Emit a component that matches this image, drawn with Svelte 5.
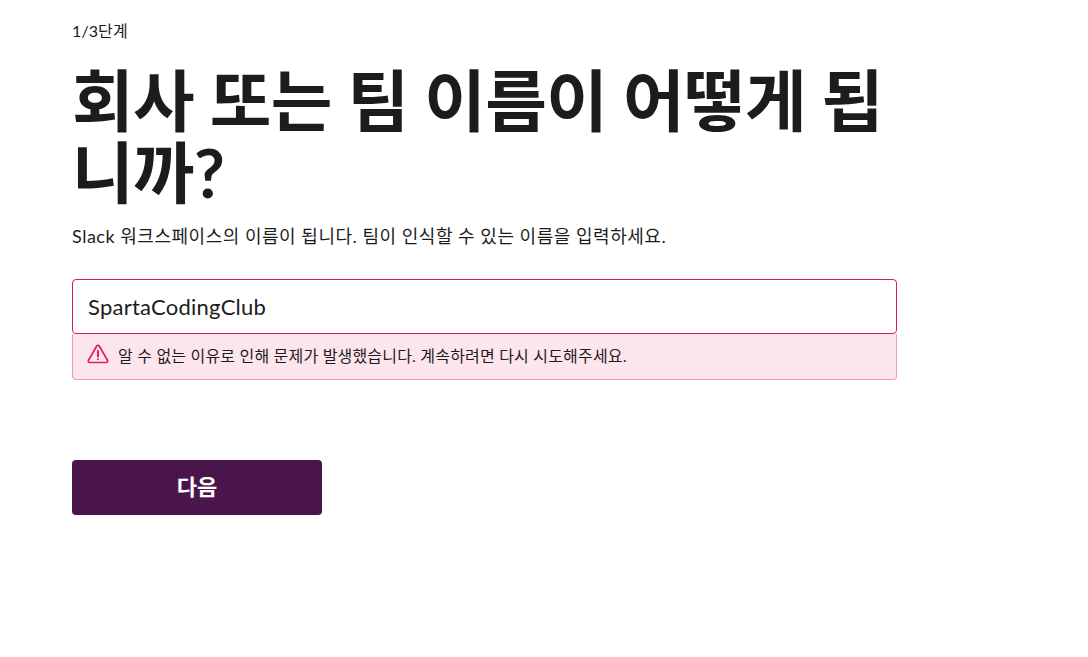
<script>
  let teamName = "SpartaCodingClub";
</script>

<main>
  <p class="step">1/3단계</p>
  <h1>회사 또는 팀 이름이 어떻게 됩니까?</h1>
  <p class="desc">Slack 워크스페이스의 이름이 됩니다. 팀이 인식할 수 있는 이름을 입력하세요.</p>

  <div class="field">
    <input type="text" bind:value={teamName} />
    <div class="error">
      <svg width="22" height="20" viewBox="0 0 22 20" fill="none" stroke="#e01e5a" stroke-width="1.7" stroke-linejoin="round" stroke-linecap="round">
        <path d="M9.6 2.2 1.5 16.2c-.6 1.1.1 2.3 1.4 2.3h16.2c1.3 0 2-1.2 1.4-2.3L12.4 2.2c-.6-1.1-2.2-1.1-2.8 0Z" />
        <path d="M11 7v5.5" stroke-width="2" />
        <path d="M11 15.2v.1" stroke-width="2" />
      </svg>
      <span>알 수 없는 이유로 인해 문제가 발생했습니다. 계속하려면 다시 시도해주세요.</span>
    </div>
  </div>

  <button>다음</button>
</main>

<style>
  :global(body) {
    background: #fff;
    font-family: Lato, "Noto Sans CJK KR", sans-serif;
    color: #1d1c1d;
  }

  main {
    width: 825px;
    padding: 20px 0 0 72px;
  }

  .step {
    margin: 0;
    font-size: 16px;
    line-height: 22px;
    letter-spacing: 0.1px;
  }

  h1 {
    margin: 22px 0 0;
    font-size: 67px;
    line-height: 72px;
    font-weight: 700;
    letter-spacing: -0.6px;
  }

  .desc {
    margin: 15px 0 0;
    font-size: 18px;
    line-height: 26px;
    letter-spacing: 0.52px;
  }

  .field {
    margin-top: 30px;
  }

  input {
    display: block;
    box-sizing: border-box;
    width: 100%;
    height: 55px;
    padding: 0 15px;
    border: 1px solid #d41b5c;
    border-radius: 4px;
    font: 400 22px Lato, "Noto Sans CJK KR", sans-serif;
    letter-spacing: 0.25px;
    color: #1d1c1d;
    outline: none;
  }

  .error {
    box-sizing: border-box;
    height: 46px;
    display: flex;
    align-items: center;
    gap: 9px;
    padding: 0 15px 3px;
    background: #fde5ee;
    border: 1px solid #f29ab8;
    border-top: none;
    border-radius: 0 0 4px 4px;
    font-size: 16px;
    letter-spacing: 0.19px;
  }

  .error svg {
    margin: -2px 0 0 -1px;
  }

  button {
    display: block;
    width: 250px;
    height: 55px;
    margin-top: 80px;
    padding: 0 0 6px;
    border: none;
    border-radius: 4px;
    background: #4a154b;
    color: #fff;
    font: 700 22px Lato, "Noto Sans CJK KR", sans-serif;
  }
</style>
